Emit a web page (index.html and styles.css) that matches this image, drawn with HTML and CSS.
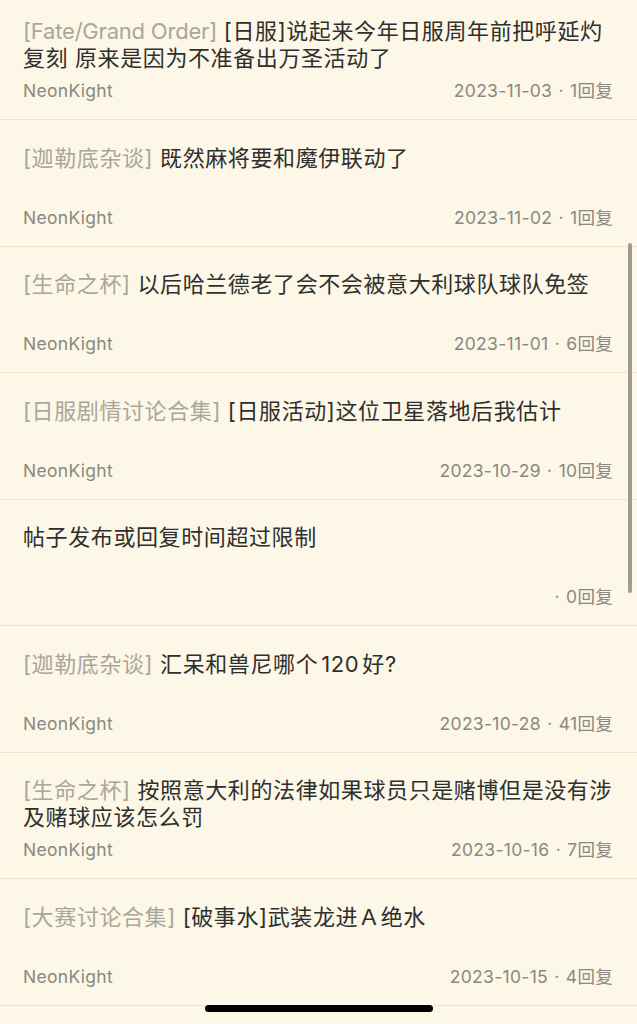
FILE: index.html
```html
<!DOCTYPE html>
<html lang="zh">
<head>
<meta charset="utf-8">
<link rel="stylesheet" href="styles.css">
</head>
<body>
<div class="screen">
  <ul class="list">
    <li class="item">
      <div class="title"><span class="tag latin">[Fate/Grand Order]</span> [日服]说起来今年日服周年前把呼延灼复刻 原来是因为不准备出万圣活动了</div>
      <div class="meta"><span class="author">NeonKight</span><span class="info">2023-11-03 · 1回复</span></div>
    </li>
    <li class="item">
      <div class="title"><span class="tag">[迦勒底杂谈]</span> 既然麻将要和魔伊联动了</div>
      <div class="meta"><span class="author">NeonKight</span><span class="info">2023-11-02 · 1回复</span></div>
    </li>
    <li class="item">
      <div class="title"><span class="tag">[生命之杯]</span> 以后哈兰德老了会不会被意大利球队球队免签</div>
      <div class="meta"><span class="author">NeonKight</span><span class="info">2023-11-01 · 6回复</span></div>
    </li>
    <li class="item">
      <div class="title"><span class="tag">[日服剧情讨论合集]</span> [日服活动]这位卫星落地后我估计</div>
      <div class="meta"><span class="author">NeonKight</span><span class="info">2023-10-29 · 10回复</span></div>
    </li>
    <li class="item">
      <div class="title">帖子发布或回复时间超过限制</div>
      <div class="meta"><span class="author"></span><span class="info">· 0回复</span></div>
    </li>
    <li class="item">
      <div class="title"><span class="tag">[迦勒底杂谈]</span> 汇呆和兽尼哪个<span class="num">120</span>好?</div>
      <div class="meta"><span class="author">NeonKight</span><span class="info">2023-10-28 · 41回复</span></div>
    </li>
    <li class="item">
      <div class="title"><span class="tag">[生命之杯]</span> 按照意大利的法律如果球员只是赌博但是没有涉及赌球应该怎么罚</div>
      <div class="meta"><span class="author">NeonKight</span><span class="info">2023-10-16 · 7回复</span></div>
    </li>
    <li class="item">
      <div class="title"><span class="tag">[大赛讨论合集]</span> [破事水]武装龙进Ａ绝水</div>
      <div class="meta"><span class="author">NeonKight</span><span class="info">2023-10-15 · 4回复</span></div>
    </li>
  </ul>
  <div class="scrollbar"></div>
  <div class="home-indicator"></div>
</div>
</body>
</html>
```

FILE: styles.css
```css
html, body {
  margin: 0;
  padding: 0;
  background: #fcf7e6;
}
body {
  font-family: Inter, "Noto Sans CJK SC", sans-serif;
  color: #2f2f2f;
}
.screen {
  position: relative;
  width: 637px;
  height: 1024px;
  overflow: hidden;
  background: #fcf7e6;
}
.list {
  list-style: none;
  margin: -6.57px 0 0 0;
  padding: 0;
}
.item {
  box-sizing: border-box;
  height: 126.57px;
  padding: 24.5px 24px 0 23px;
  border-bottom: 1px solid #ebe3cd;
  display: flex;
  flex-direction: column;
  gap: 8px;
}
.title {
  font-size: 22px;
  line-height: 27px;
  height: 54px;
  overflow: hidden;
  letter-spacing: 0.6px;
  color: #2f2f2f;
}
.tag {
  color: #aaa69b;
}
.latin {
  letter-spacing: -0.2px;
}
.num {
  margin: 0 3px;
}
.meta {
  display: flex;
  justify-content: space-between;
  align-items: center;
  height: 22px;
  font-size: 17.5px;
  line-height: 22px;
  letter-spacing: 0.3px;
  word-spacing: 1px;
  color: #8b8883;
}
.scrollbar {
  position: absolute;
  left: 628px;
  top: 243px;
  width: 4px;
  height: 350px;
  border-radius: 2px;
  background: #a09c90;
}
.home-indicator {
  position: absolute;
  left: 205px;
  top: 1004.5px;
  width: 228px;
  height: 7px;
  border-radius: 4px;
  background: #000;
}
```
